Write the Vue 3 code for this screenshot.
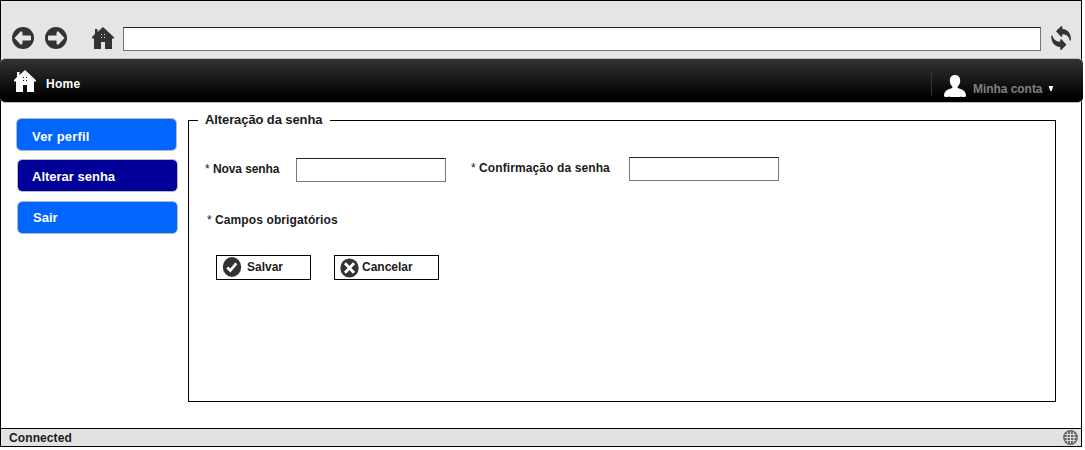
<script setup>
const menu = [
  { label: 'Ver perfil', cls: 'profile' },
  { label: 'Alterar senha', cls: 'password' },
  { label: 'Sair', cls: 'logout' },
]
const house = 'M11 0 L22 10.2 V11.5 H20 V22 H13 V15 H9 V22 H2 V11.5 H0 V10 L3 7 V2 H5.5 V5 Z'
const dots = [[9, 7], [12, 7], [9, 10], [12, 10]]
</script>

<template>
  <div class="window">
    <header class="toolbar">
      <svg class="back" width="22" height="22" viewBox="0 0 22 22">
        <circle cx="11" cy="11" r="11" fill="#333" />
        <path d="M2.5 11 L9 4 L10.5 5.5 V8.5 H18 Q19 8.5 19 9.5 V12.5 Q19 13.5 18 13.5 H10.5 V16.5 L9 18 Z" fill="#e5e5e5" />
      </svg>
      <svg class="forward" width="22" height="22" viewBox="0 0 22 22">
        <circle cx="11" cy="11" r="11" fill="#333" />
        <path d="M19.5 11 L13 4 L11.5 5.5 V8.5 H4 Q3 8.5 3 9.5 V12.5 Q3 13.5 4 13.5 H11.5 V16.5 L13 18 Z" fill="#e5e5e5" />
      </svg>
      <svg class="tool-home" width="22" height="22" viewBox="0 0 22 22">
        <path :d="house" fill="#333" />
        <rect v-for="d in dots" :key="d.join()" :x="d[0]" :y="d[1]" width="1" height="1" fill="#e5e5e5" />
      </svg>
      <input class="address" type="text" aria-label="URL" />
      <svg class="reload" width="22" height="24" viewBox="0 0 22 24">
        <path d="M5 5.2 L10.3 0 L11.3 0.5 V3 C17 3.4 20.3 7.5 20 14.5 H18.8 C17.8 10.5 15.5 8.3 11.3 8.3 V10.5 L10 10.7 Z" fill="#333" />
        <path d="M15.5 18.8 L10.2 24 L9.2 23.5 V21 C3.5 20.6 0 16.5 0.3 9.5 H1.5 C2.5 13.5 5 15.7 9.2 15.7 V13.5 L10.5 13.3 Z" fill="#333" />
      </svg>
    </header>

    <nav class="navbar">
      <svg class="nav-home" width="22" height="22" viewBox="0 0 22 22">
        <path :d="house" fill="#fff" />
        <rect v-for="d in dots" :key="d.join()" :x="d[0]" :y="d[1]" width="1" height="1" fill="#111" />
      </svg>
      <span class="home-text">Home</span>
      <span class="divider"></span>
      <svg class="user" width="22" height="22" viewBox="0 0 22 22">
        <path d="M11 0 C14 0 16.2 2.2 16.2 5.5 C16.2 8.5 15 10.3 13.7 11.6 V13 C17.5 14 22 15.5 22 21 L21 22 H17.5 L17 20.8 L16.5 22 H5.5 L5 20.8 L4.5 22 H1 L0 21 C0 15.5 4.5 14 8.3 13 V11.6 C7 10.3 5.8 8.5 5.8 5.5 C5.8 2.2 8 0 11 0 Z" fill="#fff" />
      </svg>
      <span class="account">Minha conta</span>
      <svg class="caret" width="6" height="6" viewBox="0 0 6 6"><path d="M0.6 0 H5.2 L3.6 5 H2.3 Z" fill="#fff" /></svg>
    </nav>

    <main class="content">
      <aside class="menu">
        <div v-for="m in menu" :key="m.label" class="item" :class="m.cls"><span>{{ m.label }}</span></div>
      </aside>
      <section class="panel">
        <h1 class="legend"><span>Alteração da senha</span></h1>
        <div class="fields">
          <label class="label new"><i>*</i><span>Nova senha</span></label>
          <input class="field first" type="text" />
          <label class="label confirm"><i>*</i><span>Confirmação da senha</span></label>
          <input class="field second" type="text" />
        </div>
        <p class="label required"><i>*</i><span>Campos obrigatórios</span></p>
        <div class="actions">
          <button class="save">
            <svg width="20" height="20" viewBox="0 0 20 20">
              <ellipse cx="10" cy="10" rx="9.2" ry="10" fill="#333" />
              <path d="M5.3 10.5 L8.3 13.5 L14.3 6.3" fill="none" stroke="#fff" stroke-width="2.7" />
            </svg>
            <span>Salvar</span>
          </button>
          <button class="cancel">
            <svg width="20" height="20" viewBox="0 0 20 20">
              <ellipse cx="9.5" cy="10" rx="9.2" ry="9.6" fill="#333" />
              <path d="M5 5.3 L14 14.7 M14 5.3 L5 14.7" stroke="#fff" stroke-width="2.8" />
            </svg>
            <span>Cancelar</span>
          </button>
        </div>
      </section>
    </main>

    <footer class="status">
      <span class="connected">Connected</span>
      <svg class="globe" width="15" height="15" viewBox="0 0 15 15">
        <circle cx="7.5" cy="7.5" r="7.4" fill="#666" />
        <path d="M7.5 1.5 V13.5 M1.5 7.5 H13.5 M2.3 4.5 H12.7 M2.3 10.5 H12.7 M4.8 2 Q2.9 7.5 4.8 13 M10.2 2 Q12.1 7.5 10.2 13" fill="none" stroke="#e8e8e8" stroke-width="0.9" />
      </svg>
    </footer>
  </div>
</template>

<style>
body { background: #fff; }
</style>

<style scoped>
.window {
  box-sizing: border-box;
  width: 1082px;
  height: 447px;
  border: 1px solid #000;
  display: flex;
  flex-direction: column;
  font: bold 12px/14px "Liberation Sans", Arial, sans-serif;
  color: #1b1b1b;
}
svg { display: block; flex: none; }
span { white-space: nowrap; }
.toolbar {
  height: 57px;
  flex: none;
  background: #e5e5e5;
  display: flex;
  align-items: flex-start;
}
.back { margin: 26px 0 0 11px; }
.forward { margin: 26px 0 0 11px; }
.tool-home { margin: 26px 0 0 25px; }
input {
  box-sizing: border-box;
  border: 1px solid #777;
  border-top-color: #222;
  border-radius: 0;
  padding: 0 4px;
  background: #fff;
  outline: none;
}
.address { width: 918px; height: 24px; margin: 26px 0 0 9px; }
.reload { margin: 25px 0 0 10px; }
.navbar {
  box-sizing: border-box;
  width: 1083px;
  height: 45px;
  flex: none;
  margin-left: -1px;
  border: 1px solid #bbb;
  border-width: 1px 0;
  border-radius: 5px;
  background: linear-gradient(#333, #000 90%);
  background-clip: padding-box;
  display: flex;
  align-items: flex-start;
}
.nav-home { margin: 11px 0 0 14px; }
.home-text { margin: 18px 0 0 10px; width: 885px; color: #fff; letter-spacing: 0.25px; }
.divider { width: 1px; height: 24px; margin-top: 13px; background: #333; }
.user { margin: 16px 0 0 12px; }
.account { margin: 23px 0 0 7px; width: 70px; color: #808080; letter-spacing: -0.05px; }
.caret { margin: 27px 0 0 5px; }
.content {
  flex: 1;
  display: flex;
  align-items: flex-start;
  padding: 15px 0 0 15px;
}
.menu { width: 172px; display: flex; flex-direction: column; gap: 9px; }
.item {
  box-sizing: border-box;
  width: 161px;
  height: 33px;
  margin-bottom: -1px;
  border: 1px solid #b4bac4;
  border-radius: 5px;
  background: #06f;
  background-clip: padding-box;
  color: #fff;
  font-size: 13px;
  line-height: 16px;
  padding: 9px 0 0 15px;
}
.profile { padding-top: 10px; letter-spacing: 0.2px; }
.password { margin-left: 1px; background-color: #009; padding-left: 14px; }
.logout { margin-left: 1px; padding: 8px 0 0 15px; margin-top: 1px; }
.panel {
  box-sizing: border-box;
  width: 868px;
  height: 282px;
  margin-top: 2px;
  border: 1px solid #000;
}
.legend {
  width: 132px;
  height: 16px;
  margin: -9px 0 0 9px;
  padding-left: 7px;
  box-sizing: border-box;
  background: #fff;
  font-size: 13px;
  line-height: 16px;
  letter-spacing: -0.1px;
}
.fields { display: flex; align-items: flex-start; height: 54px; margin-top: 29px; }
.label { display: flex; }
.label i { font-style: normal; font-weight: normal; width: 8px; }
.new { width: 91px; margin: 5px 0 0 16px; letter-spacing: -0.1px; }
.field { width: 150px; height: 24px; flex: none; }
.first { margin-top: 1px; }
.confirm { width: 158px; margin: 4px 0 0 25px; letter-spacing: 0.11px; }
.required { margin: 2px 0 0 18px; letter-spacing: 0.11px; }
.actions { display: flex; gap: 23px; margin: 28px 0 0 27px; }
button {
  box-sizing: border-box;
  height: 25px;
  border: 1px solid #000;
  border-radius: 0;
  background: #fff;
  color: inherit;
  font: inherit;
  display: flex;
  align-items: flex-start;
  padding: 1px 0 0 5px;
}
button span { margin-top: 3px; }
.save { width: 95px; }
.save span { margin-left: 5px; }
.cancel { width: 105px; }
.cancel svg { margin-top: 1px; }
.cancel span { margin-left: 2px; }
.status {
  height: 17px;
  flex: none;
  border-top: 1px solid #000;
  background: #e2e2e2;
  display: flex;
  justify-content: space-between;
  padding: 0 3px 0 8px;
}
.connected { margin-top: 2px; letter-spacing: 0.1px; }
.globe { margin-top: 1px; }
</style>
